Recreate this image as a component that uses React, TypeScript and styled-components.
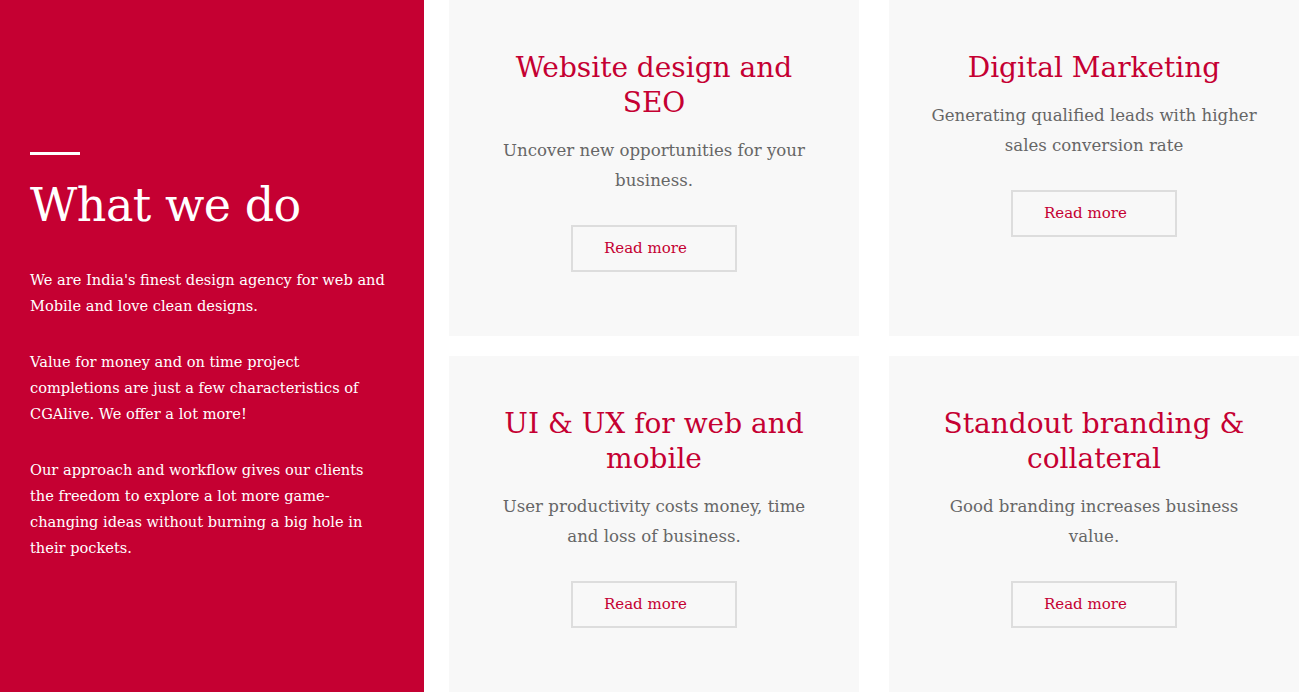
import React from 'react';
import styled, { createGlobalStyle } from 'styled-components';

const GlobalStyle = createGlobalStyle`
  html, body {
    margin: 0;
    padding: 0;
    background: #ffffff;
    overflow: hidden;
  }
  * {
    box-sizing: border-box;
  }
`;

const FONT = `"DejaVu Serif", "Liberation Serif", serif`;
const RED = '#c50032';

const Page = styled.div`
  display: flex;
  width: 1299px;
  height: 692px;
  font-family: ${FONT};
`;

const Intro = styled.section`
  width: 424px;
  flex-shrink: 0;
  background: ${RED};
  color: #ffffff;
  padding: 20px 30px 0;
  display: flex;
  flex-direction: column;
  justify-content: center;
`;

const Bar = styled.div`
  width: 50px;
  height: 3px;
  background: #ffffff;
`;

const Heading = styled.h1`
  margin: 22px 0 34px;
  font-size: 46px;
  font-weight: 300;
  line-height: 56px;
  letter-spacing: -0.5px;
`;

const Para = styled.p`
  margin: 0 0 30px;
  max-width: 358px;
  font-size: 14.6px;
  line-height: 26px;
  font-weight: 300;

  &:last-child {
    margin-bottom: 0;
  }
`;

const Grid = styled.div`
  display: grid;
  grid-template-columns: 410px 410px;
  grid-template-rows: 336px 336px;
  gap: 20px 30px;
  margin-left: 25px;
`;

const Card = styled.article`
  background: #f8f8f8;
  padding: 50px 40px 0;
  display: flex;
  flex-direction: column;
  align-items: center;
  text-align: center;
`;

const CardTitle = styled.h2`
  margin: 0;
  max-width: 320px;
  font-size: 28px;
  font-weight: 300;
  line-height: 35px;
  color: ${RED};
`;

const CardText = styled.p`
  margin: 16px 0 0;
  max-width: 330px;
  font-size: 16.6px;
  line-height: 30px;
  color: #666666;
`;

const ReadMore = styled.a`
  display: block;
  width: 166px;
  height: 47px;
  margin-top: 29px;
  padding-left: 31px;
  border: 2px solid #dddddd;
  color: ${RED};
  font-size: 15px;
  line-height: 43px;
  text-align: left;
  text-decoration: none;
`;

const services = [
  { title: 'Website design and SEO', text: 'Uncover new opportunities for your business.' },
  { title: 'Digital Marketing', text: 'Generating qualified leads with higher sales conversion rate' },
  { title: 'UI & UX for web and mobile', text: 'User productivity costs money, time and loss of business.' },
  { title: 'Standout branding & collateral', text: 'Good branding increases business value.' },
];

export default function App() {
  return (
    <>
      <GlobalStyle />
      <Page>
        <Intro>
          <Bar />
          <Heading>What we do</Heading>
          <Para>We are India's finest design agency for web and Mobile and love clean designs.</Para>
          <Para>Value for money and on time project completions are just a few characteristics of CGAlive. We offer a lot more!</Para>
          <Para>Our approach and workflow gives our clients the freedom to explore a lot more game-changing ideas without burning a big hole in their pockets.</Para>
        </Intro>
        <Grid>
          {services.map((s) => (
            <Card key={s.title}>
              <CardTitle>{s.title}</CardTitle>
              <CardText>{s.text}</CardText>
              <ReadMore href="#">Read more</ReadMore>
            </Card>
          ))}
        </Grid>
      </Page>
    </>
  );
}
